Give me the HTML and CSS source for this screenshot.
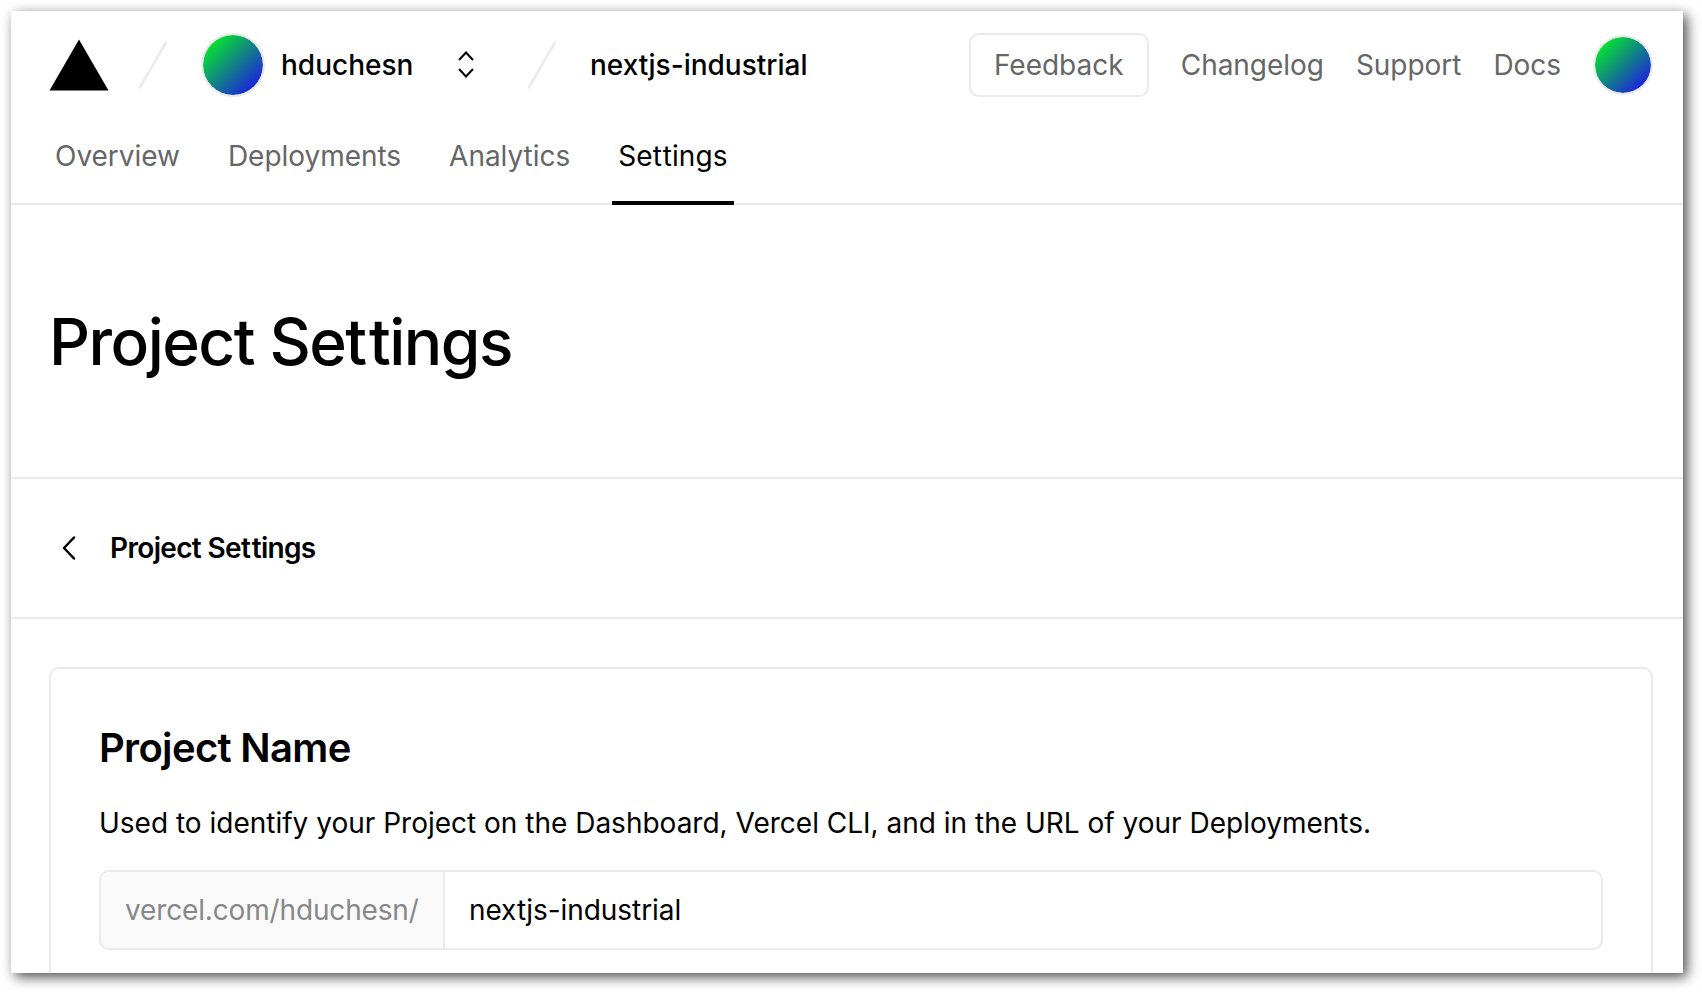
FILE: index.html
```html
<!DOCTYPE html>
<html lang="en">
<head>
<meta charset="utf-8">
<title>Project Settings</title>
<link rel="stylesheet" href="styles.css">
</head>
<body>
<div class="window">
  <header class="header">
    <div class="topbar">
      <svg class="logo" width="60" height="52" viewBox="0 0 60 52"><path d="M30 0.500 59.500 51.500H0.500z"/></svg>
      <svg class="slash" width="32" height="52" viewBox="0 0 32 52"><path d="M29 3.300 2.900 48.300"/></svg>
      <span class="avatar avatar-team"></span>
      <span class="team">hduchesn</span>
      <svg class="selector" width="18" height="28" viewBox="0 0 18 28"><path d="M2 9 9 1.500 16 9M2 18l7 7.500L16 18"/></svg>
      <svg class="slash slash-project" width="32" height="52" viewBox="0 0 32 52"><path d="M29 3.300 2.900 48.300"/></svg>
      <span class="project">nextjs-industrial</span>
      <nav class="links">
        <button class="feedback">Feedback</button>
        <a class="link">Changelog</a>
        <a class="link">Support</a>
        <a class="link">Docs</a>
        <span class="avatar avatar-user"></span>
      </nav>
    </div>
    <nav class="tabs">
      <a class="tab">Overview</a>
      <a class="tab">Deployments</a>
      <a class="tab">Analytics</a>
      <a class="tab tab-active">Se<span class="loose">t</span>tings</a>
    </nav>
  </header>
  <section class="hero"><h1 class="title">Project Se<span class="loose">t</span>tings</h1></section>
  <section class="subnav">
    <svg class="back" width="16" height="26" viewBox="0 0 16 26"><path d="M13 2.500 3 13l10 10.500"/></svg>
    <span class="subnav-title">Project Se<span class="loose">t</span>tings</span>
  </section>
  <main class="content">
    <section class="card">
      <h2 class="card-title">Project Name</h2>
      <p class="card-text">Used to identify your Project on the Dashboard, Vercel CLI, and in the URL of your Deployments.</p>
      <div class="field">
        <span class="prefix">vercel.com/hduchesn/</span>
        <span class="value">nextjs-industrial</span>
      </div>
    </section>
  </main>
</div>
</body>
</html>
```
FILE: styles.css
```css
* { box-sizing: border-box; }
body {
  margin: 0;
  height: 992px;
  padding: 11px;
  overflow: hidden;
  background: #fff;
  color: #000;
  font: 400 28px/40px Inter, sans-serif;
}
.window {
  width: 1672px;
  height: 962px;
  overflow: hidden;
  background: #fff;
  box-shadow: 4px 4px 12px rgba(0, 0, 0, 0.7);
}
.header { height: 194px; border-bottom: 2px solid #eaeaea; }
.topbar {
  display: flex;
  align-items: center;
  height: 108px;
  padding: 0 30px 0 38px;
}
.slash { margin-left: 28px; fill: none; stroke: #eaeaea; stroke-width: 2.500; stroke-linecap: round; }
.avatar {
  flex: none;
  border-radius: 50%;
  background: linear-gradient(135deg, #05e62c 12%, #1c20e0 88%) padding-box;
  border: 2px solid #eaeaea;
}
.avatar-team { width: 64px; height: 64px; margin-left: 32px; }
.team { width: 130px; margin-left: 16px; font-weight: 500; white-space: nowrap; }
.selector { margin-left: 46px; fill: none; stroke: #000; stroke-width: 2; }
.slash-project { margin-left: 51px; }
.project { margin-left: 32px; font-weight: 500; white-space: nowrap; }
.links { display: flex; align-items: center; gap: 32px; margin-left: auto; color: #666; }
.link { letter-spacing: -0.04px; }
.feedback {
  width: 180px;
  height: 64px;
  padding: 0;
  border: 2px solid #eaeaea;
  border-radius: 10px;
  background: #fff;
  color: inherit;
  font: inherit;
}
.avatar-user { width: 60px; height: 60px; }
.tabs { display: flex; gap: 36px; height: 86px; padding-left: 38px; }
.tab { height: 86px; padding: 17px 6px 0; color: #666; letter-spacing: -0.03px; }
.tab-active { color: #000; border-bottom: 4px solid #000; letter-spacing: 0.08px; }
.loose { letter-spacing: 0.03em; }
.hero {
  display: flex;
  align-items: center;
  height: 274px;
  padding: 2px 0 0 38px;
  border-bottom: 2px solid #eaeaea;
}
.title { margin: 0; font-size: 64px; font-weight: 500; line-height: 80px; letter-spacing: -1.54px; }
.subnav {
  display: flex;
  align-items: center;
  gap: 33px;
  height: 140px;
  padding-left: 50px;
  border-bottom: 2px solid #eaeaea;
}
.back { fill: none; stroke: #000; stroke-width: 2.500; stroke-linecap: round; stroke-linejoin: round; }
.subnav-title { font-weight: 600; letter-spacing: -0.66px; }
.content { padding: 48px 30px 0 38px; }
.card {
  height: 400px;
  padding: 48px;
  border: 2px solid #eaeaea;
  border-radius: 10px;
}
.card-title { margin: 5px 0 0; font-size: 40px; font-weight: 600; line-height: 52px; letter-spacing: -0.68px; }
.card-text { margin: 29px 0 0; line-height: 40px; white-space: nowrap; }
.field {
  display: flex;
  height: 80px;
  margin-top: 27px;
  border: 2px solid #eaeaea;
  border-radius: 10px;
  line-height: 76px;
  overflow: hidden;
}
.prefix { width: 344px; padding-left: 24px; border-right: 2px solid #eaeaea; background: #fafafa; color: #888; letter-spacing: -0.15px; }
.value { padding-left: 24px; letter-spacing: -0.06px; }
```
